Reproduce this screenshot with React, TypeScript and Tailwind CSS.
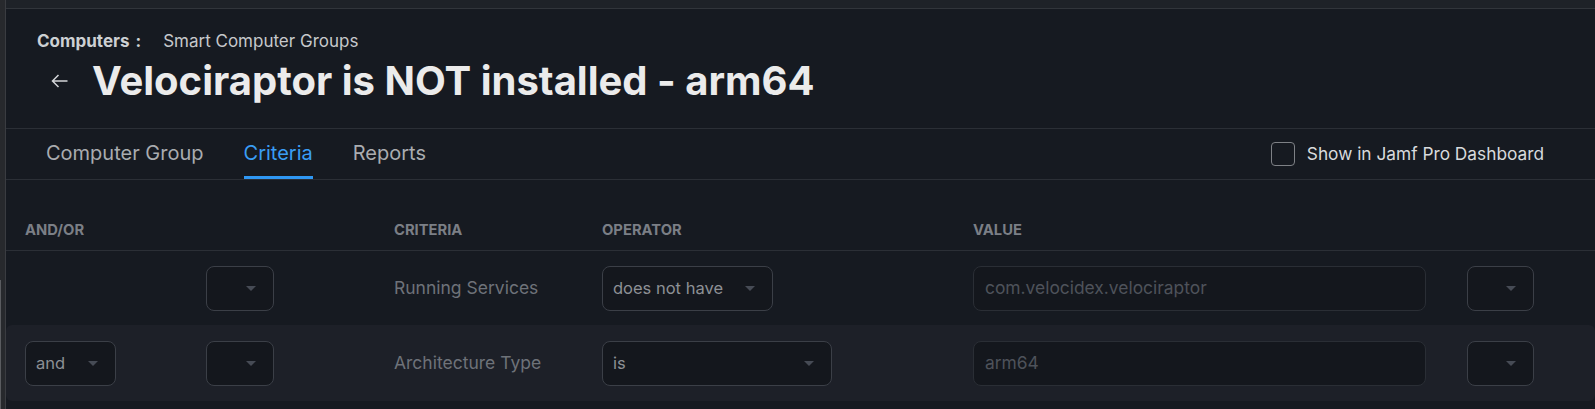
import React from 'react';

const Caret: React.FC = () => (
  <svg width="10" height="5" viewBox="0 0 10 5" className="shrink-0">
    <path d="M0 0 L10 0 L5 5 Z" fill="#464b55" />
  </svg>
);

interface SelectBoxProps {
  label?: string;
  width: string;
}

const SelectBox: React.FC<SelectBoxProps> = ({ label, width }) => (
  <div
    className={`${width} h-[45px] flex items-center justify-between pl-[10px] pr-[17px] rounded-[8px] border border-[#3b3f47] bg-[#14171d] text-[16.5px] text-[#8d9095]`}
  >
    <span>{label}</span>
    <Caret />
  </div>
);

const ValueBox: React.FC<{ value: string }> = ({ value }) => (
  <div className="w-[453px] h-[45px] flex items-center pl-[11px] rounded-[8px] border border-[#2a2e35] bg-[#14171d] text-[17.4px] text-[#4e525a]">
    {value}
  </div>
);

const rows = [
  { andOr: null, criteria: 'Running Services', operator: 'does not have', opWidth: 'w-[171px]', value: 'com.velocidex.velociraptor' },
  { andOr: 'and', criteria: 'Architecture Type', operator: 'is', opWidth: 'w-[230px]', value: 'arm64' },
];

export default function App() {
  return (
    <div
      className="w-[1595px] h-[409px] flex overflow-hidden bg-[#161a21]"
      style={{ fontFamily: 'Inter, "Noto Sans", sans-serif' }}
    >
      {/* left window edge */}
      <div className="w-[6px] shrink-0 bg-[#27292d] border-r border-[#3a3c41] flex flex-col">
        <div className="h-[280px]" />
        <div className="flex-1 w-px bg-[#5a5c60]" />
      </div>

      <div className="flex-1 flex flex-col">
        <div className="h-[9px] bg-[#1e2228] border-b border-[#31353b]" />

        {/* page header */}
        <div className="pt-[22px] pb-[25px] border-b border-[#2b2f36]">
          <div className="pl-[31px] h-[20px] flex items-center text-[17px] leading-none">
            <span className="font-bold text-[#cdd0d3]">Computers</span>
            <span className="ml-[6px] font-bold text-[#cdd0d3]">:</span>
            <span className="ml-[22px] text-[#c6c8cb]">Smart Computer Groups</span>
          </div>
          <div className="mt-[8px] h-[44px] pl-[45px] flex items-center">
            <svg width="17" height="14" viewBox="0 0 17 14" fill="none" stroke="#d3d5d8" strokeWidth="1.5">
              <path d="M16.5 7 H1.5 M7.5 1 L1.5 7 L7.5 13" />
            </svg>
            <h1 className="ml-[24px] text-[40px] font-bold text-[#ebebeb] leading-none">
              Velociraptor is NOT installed - arm64
            </h1>
          </div>
        </div>

        {/* tabs */}
        <div className="h-[51px] flex border-b border-[#2b2f36]">
          <div className="pl-[40px] flex gap-[40px] text-[20px]">
            <div className="h-full flex items-center border-b-[3px] border-transparent text-[#a9acb0]">Computer Group</div>
            <div className="h-full flex items-center border-b-[3px] border-[#2f97f3] text-[#3a9df5]">Criteria</div>
            <div className="h-full flex items-center border-b-[3px] border-transparent text-[#a9acb0]">Reports</div>
          </div>
          <div className="ml-auto pr-[51px] flex items-center gap-[12px]">
            <div className="w-[24px] h-[24px] rounded-[4px] border-[1.5px] border-[#7e8186]" />
            <span className="text-[17.3px] text-[#d8dadd]">Show in Jamf Pro Dashboard</span>
          </div>
        </div>

        {/* criteria table */}
        <div className="h-[71px] pl-[19px] pb-[10px] flex items-end border-b border-[#2b2f36]">
          <div className="grid grid-cols-[181px_188px_208px_371px_494px_auto] w-full text-[14.75px] font-bold text-[#7b7f86] leading-[20px] uppercase">
            <span>AND/OR</span>
            <span />
            <span>Criteria</span>
            <span>Operator</span>
            <span>Value</span>
            <span />
          </div>
        </div>

        {rows.map((r, i) => (
          <div
            key={r.criteria}
            className={`${i === 1 ? 'h-[76px] bg-[#1d2028] rounded-[6px]' : 'h-[74px]'} pl-[19px] grid grid-cols-[181px_188px_208px_371px_494px_auto] items-center`}
          >
            <div>{r.andOr && <SelectBox label={r.andOr} width="w-[91px]" />}</div>
            <div><SelectBox width="w-[68px]" /></div>
            <div className="text-[17.5px] text-[#6e7279]">{r.criteria}</div>
            <div><SelectBox label={r.operator} width={r.opWidth} /></div>
            <div><ValueBox value={r.value} /></div>
            <div><SelectBox width="w-[67px]" /></div>
          </div>
        ))}
      </div>
    </div>
  );
}
